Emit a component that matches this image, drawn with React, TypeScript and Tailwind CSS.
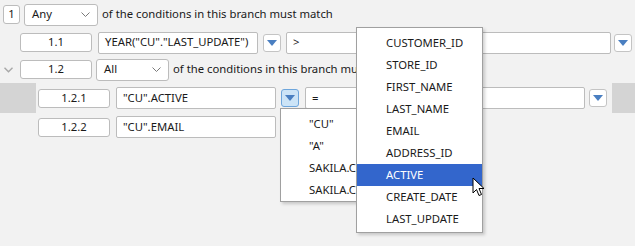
import React from 'react';

const font = { fontFamily: '"Noto Sans", "Open Sans", sans-serif' };

const Box: React.FC<{ w: string; center?: boolean; children?: React.ReactNode; h?: string }> = ({ w, center, children, h = 'h-[19px]' }) => (
  <div className={`${w} ${h} shrink-0 flex items-center bg-white border border-[#bcbcbc] rounded-[3px] text-[#1a1a1a] ${center ? 'justify-center' : 'pl-[5px]'}`}>
    {children}
  </div>
);

const Field: React.FC<{ w: string; children?: React.ReactNode }> = ({ w, children }) => (
  <div className={`${w} h-[22px] shrink-0 flex items-center bg-white border border-[#bcbcbc] rounded-[2px] pl-[6px] text-[#1a1a1a] whitespace-nowrap overflow-hidden`}>
    {children}
  </div>
);

const DropBtn: React.FC<{ active?: boolean }> = ({ active }) => (
  <div
    className={`w-[18px] h-[18px] shrink-0 flex items-center justify-center rounded-[3px] border ${
      active ? 'bg-[#cce4f7] border-[#6ea6dc]' : 'bg-white border-[#c4c4c4]'
    }`}
  >
    <svg width="10" height="6" viewBox="0 0 10 6">
      <path d="M0 0 H10 L5 6 Z" fill="#4a7fc1" />
    </svg>
  </div>
);

const Select: React.FC<{ w: string; label: string }> = ({ w, label }) => (
  <div className={`${w} h-[22px] shrink-0 flex items-center justify-between bg-white border border-[#bcbcbc] rounded-[3px] pl-[7px] pr-[7px] text-[#1a1a1a]`}>
    <span>{label}</span>
    <svg width="9" height="5" viewBox="0 0 9 5">
      <path d="M0.5 0.5 L4.5 4.5 L8.5 0.5" fill="none" stroke="#7a7a7a" strokeWidth="1" />
    </svg>
  </div>
);

const columns = ['CUSTOMER_ID', 'STORE_ID', 'FIRST_NAME', 'LAST_NAME', 'EMAIL', 'ADDRESS_ID', 'ACTIVE', 'CREATE_DATE', 'LAST_UPDATE'];

const App: React.FC = () => {
  return (
    <div className="relative w-[635px] h-[246px] bg-[#f2f2f2] overflow-hidden text-[11.3px] text-[#1a1a1a]" style={font}>
      {/* row 1 */}
      <div className="h-[29px] flex items-center pl-[3px]">
        <Box w="w-[17px]" center>1</Box>
        <div className="w-[4px]" />
        <Select w="w-[74px]" label="Any" />
        <span className="ml-[4px] whitespace-nowrap">of the conditions in this branch must match</span>
      </div>

      {/* row 2 */}
      <div className="h-[27px] flex items-center pl-[20px]">
        <Box w="w-[72px]" center>1.1</Box>
        <div className="w-[6px]" />
        <Field w="w-[160px]">YEAR("CU"."LAST_UPDATE")</Field>
        <div className="w-[5px]" />
        <DropBtn />
        <div className="w-[5px]" />
        <Field w="w-[325px]">&gt;</Field>
        <div className="w-[3px]" />
        <DropBtn />
      </div>

      {/* row 3 */}
      <div className="h-[27px] flex items-center">
        <div className="w-[20px] flex justify-center pr-[3px]">
          <svg width="9" height="6" viewBox="0 0 9 6">
            <path d="M0.5 0.8 L4.5 4.8 L8.5 0.8" fill="none" stroke="#a8a8a8" strokeWidth="1.4" />
          </svg>
        </div>
        <Box w="w-[72px]" center>1.2</Box>
        <div className="w-[4px]" />
        <Select w="w-[73px]" label="All" />
        <span className="ml-[4px] whitespace-nowrap">of the conditions in this branch must match</span>
      </div>

      {/* row 4 */}
      <div className="h-[30px] flex items-center">
        <div className="w-[36px] h-full bg-[#d4d4d4] shrink-0" />
        <div className="w-[2px]" />
        <Box w="w-[72px]" center>1.2.1</Box>
        <div className="w-[6px]" />
        <Field w="w-[160px]">"CU".ACTIVE</Field>
        <div className="w-[5px]" />
        <DropBtn active />
        <div className="w-[6px]" />
        <Field w="w-[280px]">=</Field>
        <div className="w-[4px]" />
        <DropBtn />
        <div className="w-[5px]" />
        <div className="flex-1 h-full bg-[#d4d4d4]" />
      </div>

      {/* row 5 */}
      <div className="h-[28px] flex items-center pl-[38px]">
        <Box w="w-[72px]" center>1.2.2</Box>
        <div className="w-[6px]" />
        <Field w="w-[160px]">"CU".EMAIL</Field>
      </div>

      {/* value suggestions popup, partly hidden under the column list */}
      <div className="absolute left-[280px] top-[108px] w-[78px] h-[94px] bg-white border border-[#a0a0a0] shadow-[2px_2px_3px_rgba(0,0,0,0.18)] pt-[4px]">
        <div className="w-[75px] overflow-hidden">
          {['"CU"', '"A"', 'SAKILA.CUSTOMER', 'SAKILA.CUSTOMER'].map((t, i) => (
            <div key={i} className="h-[22px] flex items-center pl-[28px] whitespace-nowrap">
              {t}
            </div>
          ))}
        </div>
      </div>

      {/* column list popup */}
      <div className="absolute left-[356px] top-[27px] w-[127px] h-[206px] bg-white border border-[#a0a0a0] shadow-[2px_2px_3px_rgba(0,0,0,0.18)] pt-[4px]">
        {columns.map((c) => (
          <div
            key={c}
            className={`h-[22px] flex items-center pl-[29px] ${c === 'ACTIVE' ? 'bg-[#3366cc] text-white' : ''}`}
          >
            {c}
          </div>
        ))}
      </div>

      {/* mouse cursor */}
      <svg className="absolute left-[472px] top-[177px]" width="14" height="21" viewBox="0 0 14 21">
        <path d="M1 1 L1 16 L4.5 12.5 L7 18.5 L9.5 17.5 L7 11.5 L12 11.5 Z" fill="white" stroke="black" strokeWidth="1" strokeLinejoin="miter" />
      </svg>
    </div>
  );
};

export default App;
